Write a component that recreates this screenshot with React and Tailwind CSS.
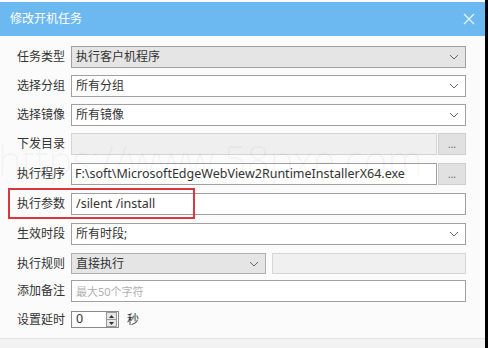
import React from "react";

const font = { fontFamily: '"Noto Sans", "Noto Sans CJK SC", sans-serif' };

function Chevron() {
  return (
    <svg width="10" height="6" viewBox="0 0 10 6" className="shrink-0">
      <path d="M1 1 L5 5 L9 1" fill="none" stroke="#666" strokeWidth="1" />
    </svg>
  );
}

function Label({ children }) {
  return (
    <div className="w-[54px] shrink-0 text-[12px] leading-none text-[#333]">{children}</div>
  );
}

function Select({ value, gray }) {
  return (
    <div
      className={`flex h-[22px] flex-1 items-center justify-between border border-[#a0a0a0] pl-[4px] pr-[6px] text-[12px] text-[#333] ${
        gray ? "bg-[#e5e5e5]" : "bg-white"
      }`}
    >
      <span className="leading-none">{value}</span>
      <Chevron />
    </div>
  );
}

function Dots() {
  return (
    <div className="flex h-[22px] w-[28px] shrink-0 items-end justify-center border border-[#cfcfcf] bg-[#e1e1e1] pb-[5px] text-[10px] leading-none text-[#666]">
      ...
    </div>
  );
}

export default function App() {
  return (
    <div className="relative h-[348px] w-[488px] overflow-hidden bg-black" style={font}>
      <div className="flex h-[348px] w-[485px] flex-col bg-[#fbfbfb]">
        <div className="mt-[2px] flex h-[34px] shrink-0 items-center justify-between bg-[#6cb9f2] pl-[10px] pr-[10px]">
          <span className="text-[12px] text-white">修改开机任务</span>
          <svg width="12" height="12" viewBox="0 0 12 12">
            <path d="M1 1 L11 11 M11 1 L1 11" stroke="#e8f3fc" strokeWidth="1.3" />
          </svg>
        </div>

        <div className="flex flex-1 flex-col pl-[17px] pr-[19px] pt-[10px]">
          <div className="flex items-center">
            <Label>任务类型</Label>
            <Select value="执行客户机程序" gray />
          </div>
          <div className="mt-[7px] flex items-center">
            <Label>选择分组</Label>
            <Select value="所有分组" />
          </div>
          <div className="mt-[7px] flex items-center">
            <Label>选择镜像</Label>
            <Select value="所有镜像" />
          </div>
          <div className="mt-[7px] flex items-center">
            <Label>下发目录</Label>
            <div className="h-[22px] flex-1 border border-[#d4d4d4] bg-[#efefef]" />
            <div className="ml-[1px]"><Dots /></div>
          </div>
          <div className="mt-[8px] flex items-center">
            <Label>执行程序</Label>
            <div className="flex h-[22px] flex-1 items-center border border-[#a0a0a0] bg-white pl-[3px] text-[12.5px] leading-none text-[#333]">
              F:\soft\MicrosoftEdgeWebView2RuntimeInstallerX64.exe
            </div>
            <div className="ml-[1px]"><Dots /></div>
          </div>
          <div className="relative mt-[8px] flex items-center">
            <div className="pointer-events-none absolute left-[-9px] top-[-5px] h-[31px] w-[187px] border-2 border-[#d9373f]" />
            <Label>执行参数</Label>
            <div className="flex h-[22px] flex-1 items-center border border-[#a0a0a0] bg-white pl-[4px] text-[12.5px] leading-none text-[#333]">
              /silent /install
            </div>
          </div>
          <div className="mt-[8px] flex items-center">
            <Label>生效时段</Label>
            <Select value="所有时段;" />
          </div>
          <div className="mt-[8px] flex items-center">
            <Label>执行规则</Label>
            <div className="flex h-[21px] w-[195px] items-center justify-between border border-[#b0b0b0] bg-[#e5e5e5] pl-[4px] pr-[6px] text-[12px] text-[#333]">
              <span className="leading-none">直接执行</span>
              <Chevron />
            </div>
            <div className="ml-[6px] h-[21px] flex-1 border border-[#d6d6d6] bg-[#f0f0f0]" />
          </div>
          <div className="mt-[6px] flex items-center">
            <Label>添加备注</Label>
            <div className="flex h-[22px] flex-1 items-center border border-[#a0a0a0] bg-white pl-[4px] text-[11px] leading-none text-[#b0b0b0]">
              最大50个字符
            </div>
          </div>
          <div className="mt-[9px] flex items-center">
            <Label>设置延时</Label>
            <div className="flex h-[17px] w-[48px] items-center justify-between border border-[#8a8a8a] bg-white pl-[4px] pr-[1px]">
              <span className="text-[12.5px] leading-none text-[#333]">0</span>
              <div className="flex h-[15px] w-[11px] flex-col border border-[#999] bg-[#e6e6e6]">
                <div className="flex flex-1 items-center justify-center border-b border-[#999]">
                  <svg width="5" height="3" viewBox="0 0 5 3"><path d="M0 3 L2.5 0 L5 3Z" fill="#333" /></svg>
                </div>
                <div className="flex flex-1 items-center justify-center">
                  <svg width="5" height="3" viewBox="0 0 5 3"><path d="M0 0 L2.5 3 L5 0Z" fill="#333" /></svg>
                </div>
              </div>
            </div>
            <span className="ml-[8px] text-[12px] leading-none text-[#333]">秒</span>
          </div>
        </div>

        <div className="h-[10px] shrink-0 border-t border-[#e4e4e4] bg-[#f2f2f2]" />
      </div>

      <div
        className="pointer-events-none absolute left-[-2px] top-[140px] whitespace-nowrap text-[40px] font-light leading-none text-black/[0.045]"
        style={{ fontFamily: '"Open Sans", sans-serif' }}
      >
        https://www.58pxe.com
      </div>
    </div>
  );
}
